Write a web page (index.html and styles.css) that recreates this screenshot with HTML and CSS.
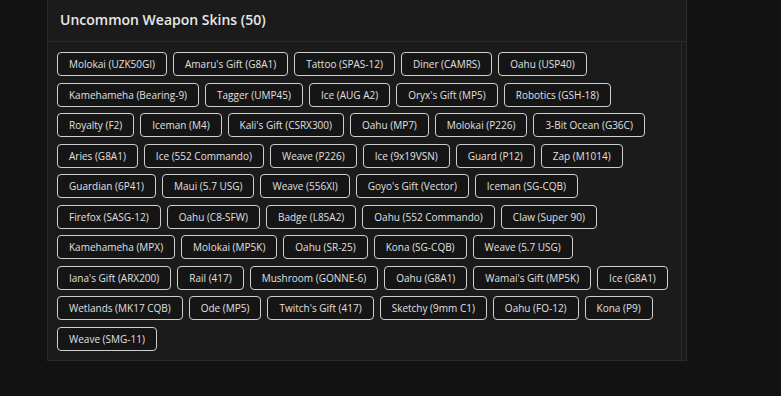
FILE: index.html
```html
<!DOCTYPE html>
<html lang="en">
  <head>
    <meta charset="UTF-8" />
    <meta name="viewport" content="width=device-width, initial-scale=1.0" />
    <title>Uncommon Weapon Skins</title>
    <link rel="stylesheet" href="styles.css">
  </head>
  <body>
    <div class="panel">
      <div class="panel-header">Uncommon Weapon Skins (50)</div>
      <div class="panel-body">
        <div class="skins">
          <span class="skin">Molokai (UZK50GI)</span>
          <span class="skin">Amaru's Gift (G8A1)</span>
          <span class="skin">Tattoo (SPAS-12)</span>
          <span class="skin">Diner (CAMRS)</span>
          <span class="skin">Oahu (USP40)</span>
          <span class="skin">Kamehameha (Bearing-9)</span>
          <span class="skin">Tagger (UMP45)</span>
          <span class="skin">Ice (AUG A2)</span>
          <span class="skin">Oryx's Gift (MP5)</span>
          <span class="skin">Robotics (GSH-18)</span>
          <span class="skin">Royalty (F2)</span>
          <span class="skin">Iceman (M4)</span>
          <span class="skin">Kali's Gift (CSRX300)</span>
          <span class="skin">Oahu (MP7)</span>
          <span class="skin">Molokai (P226)</span>
          <span class="skin">3-Bit Ocean (G36C)</span>
          <span class="skin">Aries (G8A1)</span>
          <span class="skin">Ice (552 Commando)</span>
          <span class="skin">Weave (P226)</span>
          <span class="skin">Ice (9x19VSN)</span>
          <span class="skin">Guard (P12)</span>
          <span class="skin">Zap (M1014)</span>
          <span class="skin">Guardian (6P41)</span>
          <span class="skin">Maui (5.7 USG)</span>
          <span class="skin">Weave (556XI)</span>
          <span class="skin">Goyo's Gift (Vector)</span>
          <span class="skin">Iceman (SG-CQB)</span>
          <span class="skin">Firefox (SASG-12)</span>
          <span class="skin">Oahu (C8-SFW)</span>
          <span class="skin">Badge (L85A2)</span>
          <span class="skin">Oahu (552 Commando)</span>
          <span class="skin">Claw (Super 90)</span>
          <span class="skin">Kamehameha (MPX)</span>
          <span class="skin">Molokai (MP5K)</span>
          <span class="skin">Oahu (SR-25)</span>
          <span class="skin">Kona (SG-CQB)</span>
          <span class="skin">Weave (5.7 USG)</span>
          <span class="skin">Iana's Gift (ARX200)</span>
          <span class="skin">Rail (417)</span>
          <span class="skin">Mushroom (GONNE-6)</span>
          <span class="skin">Oahu (G8A1)</span>
          <span class="skin">Wamai's Gift (MP5K)</span>
          <span class="skin">Ice (G8A1)</span>
          <span class="skin">Wetlands (MK17 CQB)</span>
          <span class="skin">Ode (MP5)</span>
          <span class="skin">Twitch's Gift (417)</span>
          <span class="skin">Sketchy (9mm C1)</span>
          <span class="skin">Oahu (FO-12)</span>
          <span class="skin">Kona (P9)</span>
          <span class="skin">Weave (SMG-11)</span>
        </div>
      </div>
    </div>
  </body>
</html>
```

FILE: styles.css
```css
body {
  margin: 0;
  background: #121212;
  font-family: "Open Sans", "Liberation Sans", sans-serif;
  color: #e4e4e4;
}
.panel {
  margin-left: 47px;
  width: 640px;
  box-sizing: border-box;
  background: #1b1b1b;
  border: 1px solid #2a2a2a;
  border-top: 0;
}
.panel-header {
  height: 41px;
  line-height: 39px;
  padding-left: 12px;
  font-size: 14px;
  font-weight: 600;
  color: #e8e8e8;
  border-bottom: 1px solid #2a2a2a;
}
.panel-body {
  margin-right: 4px;
  border-right: 1px solid #2a2a2a;
  padding: 10px 5px 9px 9px;
}
.skins {
  display: flex;
  flex-wrap: wrap;
  gap: 6.5px 6px;
}
.skin {
  height: 24px;
  box-sizing: border-box;
  line-height: 22px;
  padding: 0 11px;
  font-size: 10px;
  color: #e0e0e0;
  background: #151515;
  border: 1px solid #cfcfcf;
  border-radius: 4px;
  white-space: nowrap;
}
```
